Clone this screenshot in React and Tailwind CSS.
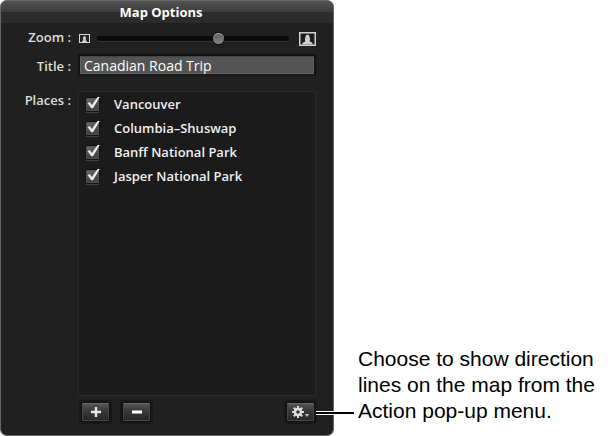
import { useState } from "react";

const PLACES = [
  "Vancouver",
  "Columbia–Shuswap",
  "Banff National Park",
  "Jasper National Park",
];

const buttonStyle =
  "w-[29px] h-5 flex items-center justify-center rounded-[2px] border border-[#101010] bg-linear-to-b from-[#575757] via-[#363636] to-[#262626] text-[#e4e4e4] shadow-[inset_0_1px_0_#6c6c6c,inset_0_0_0_1px_#484848,0_0_0_2px_#181818]";

function PortraitIcon({ className }) {
  return (
    <svg viewBox="0 0 17 14" className={className} aria-hidden="true">
      <rect x="0.75" y="0.75" width="15.5" height="12.5" fill="#1c1c1c" stroke="#d2d2d2" strokeWidth="1.5" />
      <path d="M3 12.500c.2-1.800 1.600-2.300 3.500-3.300C5.700 8.400 5.900 6.500 6.400 5c.3-1.600 1-2.600 2.100-2.600S10.300 3.400 10.600 5c.5 1.500.7 3.400-.1 4.200 1.900 1 3.300 1.500 3.500 3.300z" fill="#cfcfcf" />
    </svg>
  );
}

function SmallPortraitIcon() {
  return (
    <svg viewBox="0 0 11 9" className="w-[11px] h-[9px] shrink-0" aria-hidden="true">
      <rect x="0.5" y="0.5" width="10" height="8" fill="#222" stroke="#d6d6d6" />
      <path d="M3 8c.1-1 .8-1.400 1.400-1.700C3.900 5.300 3.800 2 5.500 2s1.600 3.300 1.100 4.300C7.200 6.600 7.900 7 8 8z" fill="#cfcfcf" />
    </svg>
  );
}

function GearIcon() {
  return (
    <svg viewBox="0 0 19 12" className="w-[19px] h-3" aria-hidden="true">
      <g fill="none" stroke="#dedede">
        <circle cx="7" cy="6" r="3" strokeWidth="2.4" />
        <path
          d="M7 0v2.500M7 9.500V12M1 6h2.500M10.500 6H13M2.800 1.800l1.700 1.700M9.500 8.500l1.700 1.700M2.800 10.200l1.700-1.700M9.500 3.500l1.700-1.700"
          strokeWidth="2"
        />
      </g>
      <path d="M14 8h4l-2 3z" fill="#c4c4c4" />
    </svg>
  );
}

function PlaceRow({ name, checked, onToggle }) {
  return (
    <label className="flex items-center h-6 pl-[6px] font-semibold text-[#f0f0f0]">
      <span className="relative w-[15px] h-[15px] mr-[14px]">
        <input
          type="checkbox"
          checked={checked}
          onChange={onToggle}
          className="peer block appearance-none w-[15px] h-[15px] rounded-[2px] border border-[#111] bg-linear-to-b from-[#666] to-[#3a3a3a] shadow-[inset_0_0_0_1px_#545454,0_1px_0_#404040]"
        />
        <svg
          viewBox="0 0 15 15"
          className="absolute inset-0 overflow-visible pointer-events-none opacity-0 peer-checked:opacity-100"
          aria-hidden="true"
        >
          <path d="M2.500 6l2.300-1 2 3L12.500 0h2.300L8 11.200H6.200z" fill="#e8e8e8" />
        </svg>
      </span>
      {name}
    </label>
  );
}

export default function App() {
  const [zoom, setZoom] = useState(64);
  const [title, setTitle] = useState("Canadian Road Trip");
  const [checked, setChecked] = useState(PLACES.map(() => true));

  const toggle = (index) =>
    setChecked(checked.map((value, i) => (i === index ? !value : value)));

  return (
    <main className="min-h-screen bg-white grid grid-cols-[minmax(0,334px)_1fr]">
      <section className="flex flex-col rounded-[7px] border border-[#686868] border-t-[#666] bg-[#202020] pb-[13px] overflow-hidden font-['Open_Sans',sans-serif] text-[13px] leading-5 text-[#f0f0f0]">
        <h1 className="h-[22px] pr-3 text-center leading-[22px] font-bold text-white bg-[linear-gradient(#545454,#3b3b3b_50%,#2d2d2d_50%,#2b2b2b)]">
          Map Options
        </h1>

        <div className="flex-1 grid grid-cols-[70px_1fr] grid-rows-[auto_auto_1fr_auto] gap-x-[7px] pr-[17px]">
          <label htmlFor="zoom" className="h-[31px] pt-1 text-right font-semibold text-[#dedede]">
            Zoom :
          </label>
          <div className="flex items-center h-[31px] pl-px">
            <SmallPortraitIcon />
            <input
              id="zoom"
              type="range"
              min="0"
              max="100"
              value={zoom}
              onChange={(e) => setZoom(Number(e.target.value))}
              className="flex-1 min-w-0 ml-[7px] mr-[10px] h-3 appearance-none bg-transparent [&::-webkit-slider-runnable-track]:h-[5px] [&::-webkit-slider-runnable-track]:rounded-full [&::-webkit-slider-runnable-track]:bg-[#0c0c0c] [&::-webkit-slider-runnable-track]:shadow-[0_1px_0_#303030] [&::-webkit-slider-thumb]:appearance-none [&::-webkit-slider-thumb]:w-[11px] [&::-webkit-slider-thumb]:h-[11px] [&::-webkit-slider-thumb]:-mt-[3px] [&::-webkit-slider-thumb]:rounded-full [&::-webkit-slider-thumb]:bg-linear-to-b [&::-webkit-slider-thumb]:from-[#5c5c5c] [&::-webkit-slider-thumb]:to-[#868686] [&::-webkit-slider-thumb]:shadow-[inset_0_1px_0_#a0a0a0,0_0_0_1px_#0c0c0c]"
            />
            <PortraitIcon className="w-[17px] h-[14px] shrink-0" />
          </div>

          <label htmlFor="title" className="pt-[2px] text-right font-semibold text-[#dedede]">
            Title :
          </label>
          <input
            id="title"
            type="text"
            value={title}
            onChange={(e) => setTitle(e.target.value)}
            className="w-full min-w-0 h-[22px] px-1 bg-[#545454] border-2 border-[#111] border-b-[#1a1a1a] shadow-[inset_0_1px_0_#454545,inset_0_0_0_1px_#606060] text-[14px] text-white outline-none"
          />

          <span id="places" className="pt-[14px] text-right font-semibold text-[#dedede]">
            Places :
          </span>
          <div
            role="group"
            aria-labelledby="places"
            className="mt-[15px] border border-[#2a2a2a] bg-[#1b1b1b]"
          >
            {PLACES.map((name, index) => (
              <PlaceRow
                key={name}
                name={name}
                checked={checked[index]}
                onToggle={() => toggle(index)}
              />
            ))}
          </div>

          <div className="col-start-2 flex pt-[6px] pl-[3px] pr-px">
            <button type="button" aria-label="Add place" className={buttonStyle}>
              <svg viewBox="0 0 10 10" className="w-[10px] h-[10px]">
                <path d="M5 0v10M0 5h10" stroke="currentColor" strokeWidth="2.500" />
              </svg>
            </button>
            <button type="button" aria-label="Remove place" className={`${buttonStyle} ml-3`}>
              <svg viewBox="0 0 10 10" className="w-[10px] h-[10px]">
                <path d="M0 5h10" stroke="#fff" strokeWidth="3" />
              </svg>
            </button>
            <button type="button" aria-label="Action" className={`${buttonStyle} ml-auto`}>
              <GearIcon />
            </button>
          </div>
        </div>
      </section>

      <aside className="relative self-end pl-6 pb-3">
        {/* leader line from the Action button to the note */}
        <span className="absolute bottom-[22px] -left-[18px] w-[38px] h-[2px] bg-black" />
        <span className="absolute bottom-[22px] -left-[18px] w-[18px] h-[2px] bg-black shadow-[0_1px_0_#fff,0_-1px_0_#fff]" />
        <p className="font-['Liberation_Sans',Arial,sans-serif] text-[21px] leading-[26px] text-black">
          Choose to show direction
          <br />
          lines on the map from the
          <br />
          Action pop-up menu.
        </p>
      </aside>
    </main>
  );
}
